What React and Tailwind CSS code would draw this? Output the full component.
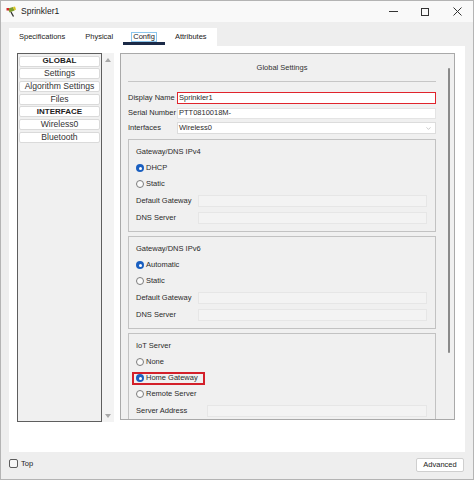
import { ChevronDown } from 'lucide-react';

const Radio = ({ checked, label, boxed }) => {
  const dot = checked ? (
    <span className="w-[8px] h-[8px] rounded-full bg-[#1a5fc0] flex items-center justify-center shrink-0">
      <span className="w-[3px] h-[3px] rounded-full bg-white" />
    </span>
  ) : (
    <span className="w-[8px] h-[8px] rounded-full border border-[#7c7c7c] bg-[#fafafa] shrink-0" />
  );

  return (
    <div className="h-[16px] flex items-center pl-[7px]">
      {boxed ? (
        <span className="flex items-center gap-[2px] h-[13px] -ml-[4px] pl-[2px] pr-[5px] border-[2px] border-[#d3202a]">
          {dot}
          <span>{label}</span>
        </span>
      ) : (
        <span className="flex items-center gap-[2px]">
          {dot}
          <span>{label}</span>
        </span>
      )}
    </div>
  );
};

const FieldRow = ({ label, wide }) => (
  <div className="h-[17px] flex items-center pl-[7px] pr-[8px]">
    <span className={wide ? 'w-[71px] shrink-0' : 'w-[62px] shrink-0'}>{label}</span>
    <div className="flex-1 h-[12px] bg-[#f3f3f3] border border-[#e6e6e6]" />
  </div>
);

const GroupBox = ({ title, children }) => (
  <div className="border border-[#c2c2c2] bg-[#f0f0f0] pt-[4px] pb-[5px]">
    <div className="h-[16px] flex items-center pl-[7px]">{title}</div>
    {children}
  </div>
);

const Tab = ({ label, active }) => (
  <div className="h-full px-[8px] flex flex-col justify-end items-stretch">
    <span
      className={
        active
          ? 'h-[10px] flex items-center border border-[#8cc6ec] px-px leading-none'
          : 'h-[10px] flex items-center border border-transparent px-px leading-none'
      }
    >
      {label}
    </span>
    <span className={active ? 'h-[3px] mb-px bg-[#1b2a47] -mx-[8px]' : 'h-[3px] mb-px'} />
  </div>
);

const listItems = [
  { label: 'GLOBAL', bold: true },
  { label: 'Settings' },
  { label: 'Algorithm Settings' },
  { label: 'Files' },
  { label: 'INTERFACE', bold: true },
  { label: 'Wireless0' },
  { label: 'Bluetooth' },
];

const App = () => {
  return (
    <div className="w-[474px] h-[480px] flex flex-col bg-[#eeeeee] border border-[#b4b4b4] text-[#2b2b2b] font-['Liberation_Sans',Arial,sans-serif] overflow-hidden">
      {/* Title bar */}
      <div className="h-[21px] shrink-0 bg-[#f9f9f9] flex items-center pl-[5px]">
        <svg width="11" height="11" viewBox="0 0 11 11" className="shrink-0">
          <path d="M2 2.5 L7 1 L8.5 4.5 L3.5 6.5 Z" fill="#7d9b2c" />
          <path d="M7 1 L9 0.5 L10 3.5 L8.5 4.5 Z" fill="#d9c41f" />
          <rect x="0.5" y="2" width="2.5" height="2.5" fill="#d22b2b" />
          <line x1="5" y1="6" x2="7.5" y2="10.5" stroke="#2f2f2f" strokeWidth="1.3" />
        </svg>
        <span className="ml-[4px] text-[8.5px] text-[#1a1a1a]">Sprinkler1</span>
        <div className="ml-auto flex items-center h-full">
          <div className="w-[32px] h-full flex items-center justify-center">
            <span className="w-[9px] h-px bg-[#333]" />
          </div>
          <div className="w-[32px] h-full flex items-center justify-center">
            <span className="w-[8px] h-[8px] border border-[#333]" />
          </div>
          <div className="w-[32px] h-full flex items-center justify-center">
            <svg width="9" height="9" viewBox="0 0 9 9">
              <path d="M0.5 0.5 L8.5 8.5 M8.5 0.5 L0.5 8.5" stroke="#333" strokeWidth="1" />
            </svg>
          </div>
        </div>
      </div>

      {/* Body */}
      <div className="flex-1 flex flex-col px-[8px] pt-[6px]">
        {/* Tab strip */}
        <div className="h-[18px] shrink-0 flex">
          <div className="h-full bg-white flex text-[7.5px] text-[#222]">
            <Tab label="Specifications" />
            <Tab label="Physical" />
            <Tab label="Config" active />
            <Tab label="Attributes" />
          </div>
        </div>

        {/* White content */}
        <div className="h-[406px] shrink-0 bg-white flex pt-[7px] pl-[8px] pr-[10px]">
          {/* Left list */}
          <div className="w-[85px] h-[369px] shrink-0 border-[1.5px] border-[#5e5e5e] bg-[#f0f0f0] flex flex-col gap-[1.7px] px-px pt-[1.5px]">
            {listItems.map((item) => (
              <div
                key={item.label}
                className={
                  item.bold
                    ? 'h-[11px] flex items-center justify-center bg-white border border-[#dadada] rounded-[2px] text-[8px] font-bold text-[#222] leading-none'
                    : 'h-[11px] flex items-center justify-center bg-white border border-[#dadada] rounded-[2px] text-[8.6px] text-[#333] leading-none'
                }
              >
                {item.label}
              </div>
            ))}
          </div>

          {/* Left scrollbar */}
          <div className="w-[12px] h-[369px] shrink-0 bg-[#f3f3f3] flex flex-col justify-between items-center pt-[5px] pb-[4px]">
            <svg width="6" height="4" viewBox="0 0 6 4">
              <path d="M3 0 L6 4 L0 4 Z" fill="#a8a8a8" />
            </svg>
            <svg width="6" height="4" viewBox="0 0 6 4">
              <path d="M0 0 L6 0 L3 4 Z" fill="#a8a8a8" />
            </svg>
          </div>

          {/* Right panel */}
          <div className="ml-[6px] w-[335px] h-[367px] shrink-0 border border-[#a9a9a9] bg-[#f0f0f0] flex text-[7.5px] text-[#2b2b2b]">
            <div className="flex-1 min-w-0 pl-[7px] pr-[8px] overflow-hidden flex flex-col">
              <div className="h-[28px] shrink-0 flex items-center justify-center border-b border-[#c6c6c6] text-[#333]">
                Global Settings
              </div>

              <div className="mt-[10px] flex flex-col gap-[3px]">
                <div className="h-[12px] flex items-center">
                  <span className="w-[49px] shrink-0">Display Name</span>
                  <div className="flex-1 h-[12px] bg-white border-[1.5px] border-[#e0242c] flex items-center pl-[1px]">
                    Sprinkler1
                  </div>
                </div>
                <div className="h-[12px] flex items-center">
                  <span className="w-[49px] shrink-0">Serial Number</span>
                  <div className="flex-1 h-[11px] bg-white border border-[#e4e4e4] flex items-center pl-[1px]">
                    PTT0810018M-
                  </div>
                </div>
                <div className="h-[12px] flex items-center">
                  <span className="w-[49px] shrink-0">Interfaces</span>
                  <div className="flex-1 h-[12px] bg-white border border-[#dcdcdc] flex items-center pl-[1px] pr-[3px]">
                    <span className="flex-1">Wireless0</span>
                    <ChevronDown size={7} strokeWidth={1.5} className="text-[#888]" />
                  </div>
                </div>
              </div>

              <div className="mt-[5px] flex flex-col gap-[4px]">
                <GroupBox title="Gateway/DNS IPv4">
                  <Radio checked label="DHCP" />
                  <Radio label="Static" />
                  <FieldRow label="Default Gateway" />
                  <FieldRow label="DNS Server" />
                </GroupBox>

                <GroupBox title="Gateway/DNS IPv6">
                  <Radio checked label="Automatic" />
                  <Radio label="Static" />
                  <FieldRow label="Default Gateway" />
                  <FieldRow label="DNS Server" />
                </GroupBox>

                <GroupBox title="IoT Server">
                  <Radio label="None" />
                  <Radio checked boxed label="Home Gateway" />
                  <Radio label="Remote Server" />
                  <FieldRow label="Server Address" wide />
                </GroupBox>
              </div>
            </div>

            {/* Right scrollbar */}
            <div className="w-[10px] shrink-0 pt-[14px] pl-[4px]">
              <div className="w-[2px] h-[285px] bg-[#8a8a8a] rounded-full" />
            </div>
          </div>
        </div>

        {/* Bottom bar */}
        <div className="flex-1 flex items-start justify-between pt-[6px] text-[7.5px] text-[#222]">
          <div className="flex items-center gap-[3px]">
            <span className="w-[9px] h-[9px] border border-[#5c5c5c] rounded-[2px] bg-[#f7f7f7]" />
            <span>Top</span>
          </div>
          <div className="w-[48px] h-[14px] mr-px bg-white border border-[#cfcfcf] rounded-[2px] flex items-center justify-center">
            Advanced
          </div>
        </div>
      </div>
    </div>
  );
};

export default App;
